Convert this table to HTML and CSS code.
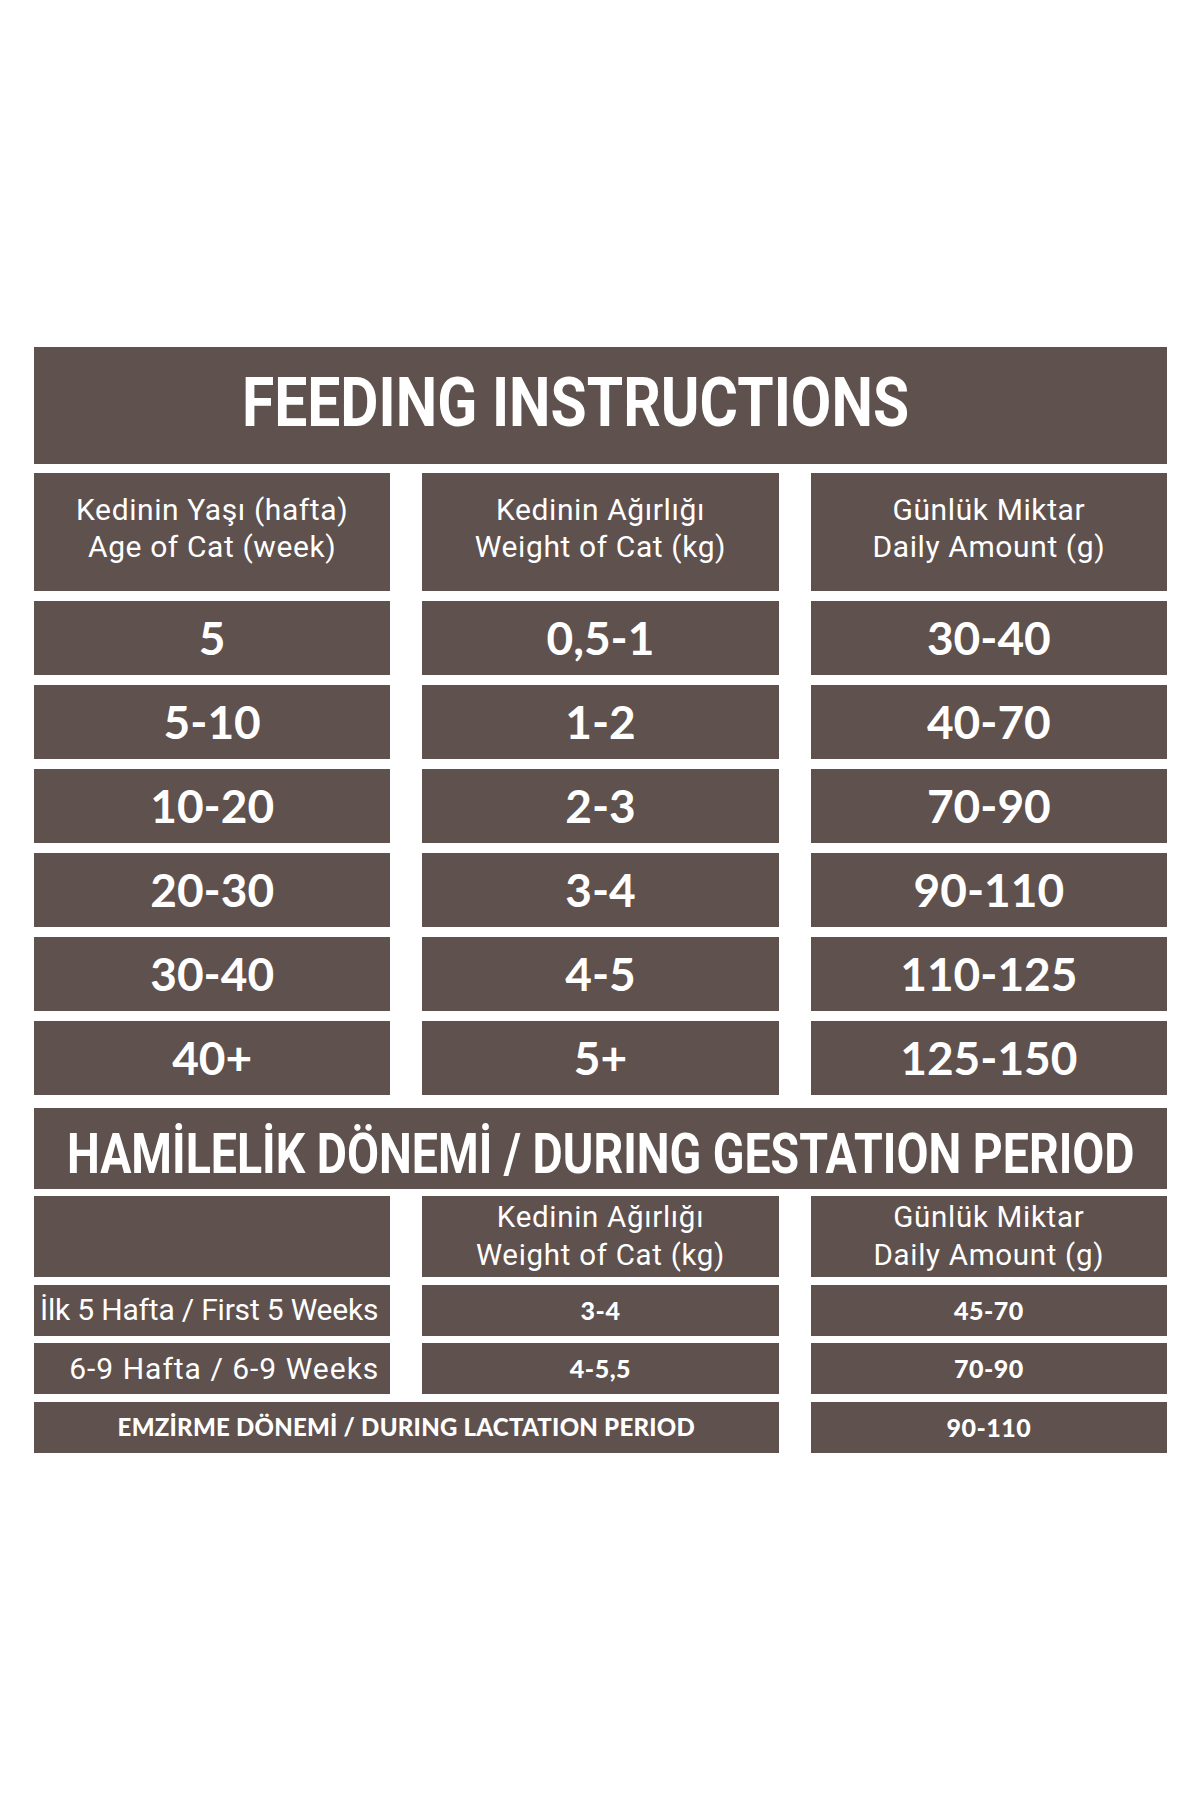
FILE: index.html
```html
<!DOCTYPE html>
<html lang="tr">
<head>
<meta charset="utf-8">
<title>Feeding Instructions</title>
<link rel="stylesheet" href="styles.css">
</head>
<body>
<main class="sheet">
  <div class="title-bar main-bar"><h1 class="title main-title">FEEDING INSTRUCTIONS</h1></div>
  <div class="feed-grid">
    <div class="cell head">Kedinin Yaşı (hafta)<br>Age of Cat (week)</div>
    <div class="cell head">Kedinin Ağırlığı<br>Weight of Cat (kg)</div>
    <div class="cell head">Günlük Miktar<br>Daily Amount (g)</div>

    <div class="cell num">5</div>
    <div class="cell num">0,5-1</div>
    <div class="cell num">30-40</div>

    <div class="cell num">5-10</div>
    <div class="cell num">1-2</div>
    <div class="cell num">40-70</div>

    <div class="cell num">10-20</div>
    <div class="cell num">2-3</div>
    <div class="cell num">70-90</div>

    <div class="cell num">20-30</div>
    <div class="cell num">3-4</div>
    <div class="cell num">90-110</div>

    <div class="cell num">30-40</div>
    <div class="cell num">4-5</div>
    <div class="cell num">110-125</div>

    <div class="cell num">40+</div>
    <div class="cell num">5+</div>
    <div class="cell num">125-150</div>
  </div>

  <div class="title-bar gest-bar"><h2 class="title gest-title">HAMİLELİK DÖNEMİ / DURING GESTATION PERIOD</h2></div>
  <div class="gest-grid">
    <div class="cell ghead"></div>
    <div class="cell ghead">Kedinin Ağırlığı<br>Weight of Cat (kg)</div>
    <div class="cell ghead">Günlük Miktar<br>Daily Amount (g)</div>

    <div class="cell label label-tight">İlk 5 Hafta / First 5 Weeks</div>
    <div class="cell small-num">3-4</div>
    <div class="cell small-num">45-70</div>

    <div class="cell label label-wide">6-9 Hafta / 6-9 Weeks</div>
    <div class="cell small-num">4-5,5</div>
    <div class="cell small-num">70-90</div>

    <div class="cell lact">EMZİRME DÖNEMİ / DURING LACTATION PERIOD</div>
    <div class="cell small-num">90-110</div>
  </div>
</main>
</body>
</html>
```

FILE: styles.css
```css
html, body {
  margin: 0;
  padding: 0;
  background: #ffffff;
}

.sheet {
  width: 1133px;
  margin: 347px 0 0 34px;
}

.title-bar {
  background: #5f514d;
  display: flex;
  align-items: center;
  justify-content: center;
  box-sizing: border-box;
  overflow: hidden;
}

.main-bar {
  height: 117px;
  margin-bottom: 9px;
  padding-right: 50px;
  padding-bottom: 7px;
}

.gest-bar {
  height: 81px;
  margin-top: 13px;
  margin-bottom: 7px;
  padding-top: 11px;
}

.title {
  margin: 0;
  color: #ffffff;
  font-family: Roboto, "Liberation Sans", sans-serif;
  font-weight: 700;
  line-height: 1;
  white-space: nowrap;
}

.main-title {
  font-size: 69px;
  transform: scaleX(0.852);
}

.gest-title {
  font-size: 55px;
  transform: scaleX(0.845);
}

.feed-grid {
  display: grid;
  grid-template-columns: repeat(3, 1fr);
  grid-template-rows: 118px repeat(6, 74px);
  column-gap: 32px;
  row-gap: 10px;
}

.gest-grid {
  display: grid;
  grid-template-columns: repeat(3, 1fr);
  grid-template-rows: 81px repeat(3, 51px);
  column-gap: 32px;
  row-gap: 7.67px;
}

.cell {
  background: #5f514d;
  color: #ffffff;
  display: flex;
  align-items: center;
  justify-content: center;
  text-align: center;
  box-sizing: border-box;
  white-space: nowrap;
}

.head {
  font-family: Roboto, "Liberation Sans", sans-serif;
  font-weight: 400;
  font-size: 30px;
  letter-spacing: 0.6px;
  line-height: 37.5px;
  padding-bottom: 8px;
}

.ghead {
  font-family: Roboto, "Liberation Sans", sans-serif;
  font-weight: 400;
  font-size: 29.5px;
  letter-spacing: 0.7px;
  line-height: 37.5px;
}

.num {
  font-family: Lato, "Open Sans", sans-serif;
  font-weight: 700;
  font-size: 46px;
  line-height: 1;
}

.label {
  font-family: Roboto, "Liberation Sans", sans-serif;
  font-weight: 400;
  font-size: 30px;
  line-height: 30px;
  justify-content: flex-end;
  padding-right: 12px;
}

.label-tight {
  letter-spacing: -0.2px;
}

.label-wide {
  letter-spacing: 1px;
  padding-right: 11px;
}

.small-num {
  font-family: Lato, "Open Sans", sans-serif;
  font-weight: 900;
  font-size: 25px;
  letter-spacing: 0.5px;
  line-height: 1;
}

.lact {
  grid-column: span 2;
  font-family: Lato, "Open Sans", sans-serif;
  font-weight: 900;
  font-size: 24px;
  letter-spacing: 0.25px;
  line-height: 1;
}
```
